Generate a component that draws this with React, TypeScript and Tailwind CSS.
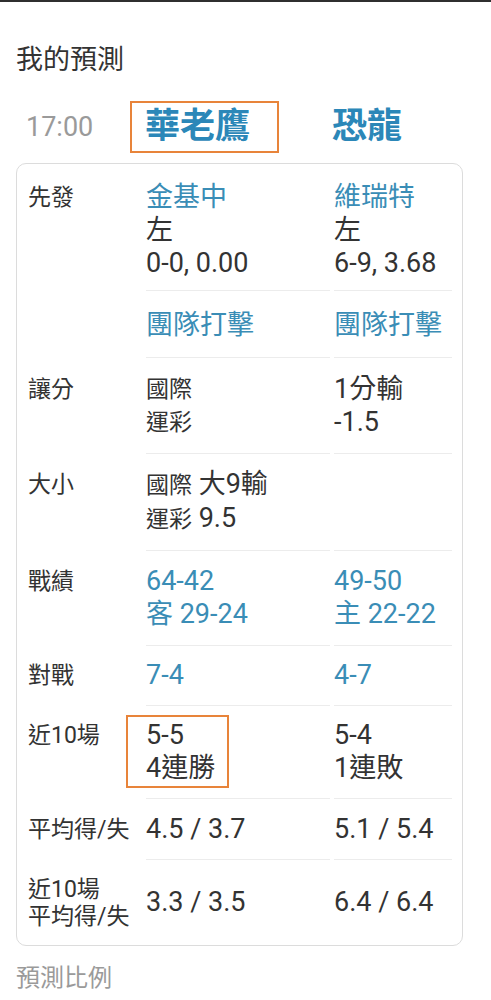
import React from 'react';

const font = { fontFamily: 'Roboto, "Noto Sans CJK TC", sans-serif' };

type Line = { text: React.ReactNode; small?: boolean };

function Cell({ lines, blue, last, className = '', children }: { lines: Line[]; blue?: boolean; last?: boolean; className?: string; children?: React.ReactNode }) {
  return (
    <div className={`relative ${last ? '' : 'border-b border-[#ececec]'} ${blue ? 'text-[#3a8db6]' : 'text-[#333]'} ${className}`}>
      {children}
      {lines.map((l, i) => (
        <div key={i} className={`leading-[33px] ${l.small ? 'text-[23px]' : 'text-[27px]'}`}>
          {l.text}
        </div>
      ))}
    </div>
  );
}

function Row({ label, left, right, blue, box, pad }: { label?: React.ReactNode; left: Line[]; right: Line[]; blue?: boolean; box?: boolean; pad: string }) {
  return (
    <div className="flex">
      <div className={`w-[118px] shrink-0 ${pad} text-[23px] leading-[33px] text-[#333]`}>{label}</div>
      <Cell lines={left} blue={blue} className={`w-[184px] mr-1 ${pad}`}>
        {box && <span className="absolute -left-5 top-[9px] bottom-[10px] w-[103px] border-2 border-[#e8843a]" />}
      </Cell>
      <Cell lines={right} blue={blue} className={`w-[118px] ${pad}`} />
    </div>
  );
}

export default function App() {
  return (
    <div className="min-h-screen bg-white" style={font}>
      <div className="h-[2px] bg-[#2f2f2f]" />

      <h2 className="px-4 pt-[41px] text-[27px] leading-[34px] text-[#333] font-normal">我的預測</h2>

      {/* 對戰隊伍 */}
      <div className="flex items-center mt-[24px] pl-[26px] h-[52px]">
        <div className="w-[104px] text-[27px] text-[#9a9a9a]">17:00</div>
        <div className="w-[149px] h-[52px] px-[13px] flex items-center border-2 border-[#e8843a] text-[35px] font-bold text-[#2b87b8]">華老鷹</div>
        <div className="ml-[53px] text-[35px] font-bold text-[#2b87b8]">恐龍</div>
      </div>

      <div className="ml-4 mt-[10px] w-[447px] rounded-[10px] border border-[#dcdcdc] pl-[11px] pr-[10px]">
        <Row
          label="先發"
          pad="pt-[17px] pb-[10px]"
          left={[{ text: <span className="text-[#3a8db6]">金基中</span> }, { text: '左' }, { text: '0-0, 0.00' }]}
          right={[{ text: <span className="text-[#3a8db6]">維瑞特</span> }, { text: '左' }, { text: '6-9, 3.68' }]}
        />
        <Row pad="pt-[18px] pb-[15px]" left={[{ text: '團隊打擊' }]} right={[{ text: '團隊打擊' }]} blue />
        <Row
          label="讓分"
          pad="pt-[15px] pb-[14px]"
          left={[{ text: '國際', small: true }, { text: '運彩', small: true }]}
          right={[{ text: '1分輸' }, { text: '-1.5' }]}
        />
        <Row
          label="大小"
          pad="py-[14px]"
          left={[
            { text: <><span className="text-[23px]">國際</span> 大9輸</> },
            { text: <><span className="text-[23px]">運彩</span> 9.5</> },
          ]}
          right={[]}
        />
        <Row label="戰績" pad="py-[14px]" left={[{ text: '64-42' }, { text: '客 29-24' }]} right={[{ text: '49-50' }, { text: '主 22-22' }]} blue />
        <Row label="對戰" pad="py-[13px]" left={[{ text: '7-4' }]} right={[{ text: '4-7' }]} blue />
        <Row label="近10場" pad="py-[13px]" left={[{ text: '5-5' }, { text: '4連勝' }]} right={[{ text: '5-4' }, { text: '1連敗' }]} box />
        <Row label="平均得/失" pad="pt-[14px] pb-[13px]" left={[{ text: '4.5 / 3.7' }]} right={[{ text: '5.1 / 5.4' }]} />
        <div className="flex items-center h-[85px]">
          <div className="w-[118px] shrink-0 text-[23px] leading-[27px] text-[#333]">
            近10場
            <br />
            平均得/失
          </div>
          <div className="w-[184px] mr-1 text-[27px] text-[#333]">3.3 / 3.5</div>
          <div className="w-[118px] text-[27px] text-[#333]">6.4 / 6.4</div>
        </div>
      </div>

      <div className="px-4 mt-[15px] text-[24px] leading-[34px] text-[#9a9a9a]">預測比例</div>
    </div>
  );
}
